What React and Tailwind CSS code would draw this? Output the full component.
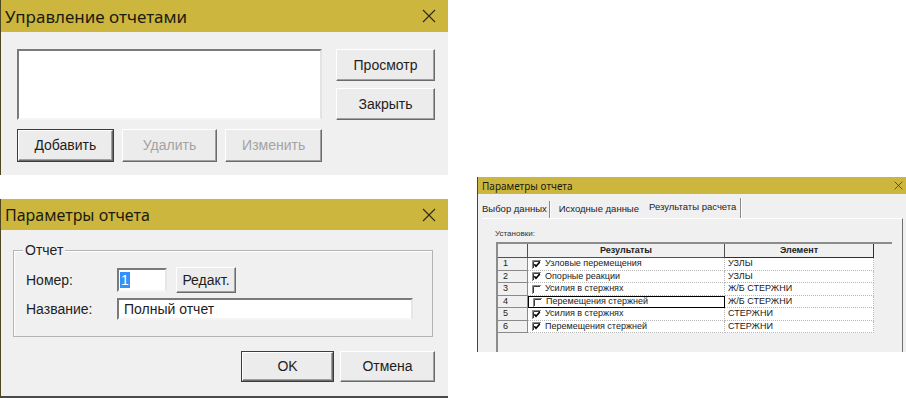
import React from "react";

const SANS = "font-['Liberation_Sans',Arial,sans-serif]";
const TITLE = "font-['Noto_Sans',sans-serif]";

function CloseX({ size = 14 }) {
  return (
    <svg width={size} height={size} viewBox="0 0 14 14" className="shrink-0">
      <path d="M1 1L13 13M13 1L1 13" stroke="#2a2a1a" strokeWidth="1.1" fill="none" />
    </svg>
  );
}

function TitleBar({ title }) {
  return (
    <div className={`h-[32px] bg-[#cdb63e] flex items-center justify-between pl-[4px] pr-[12px] ${TITLE}`}>
      <span className="text-[17px] leading-none text-[#1b1b10]">{title}</span>
      <CloseX />
    </div>
  );
}

function Btn({ children, className = "", disabled = false, isDefault = false }) {
  const inner = (
    <div
      className={`w-full h-full flex items-center justify-center bg-[#ececec] border border-t-white border-l-white border-r-[#6b6b6b] border-b-[#6b6b6b] shadow-[inset_-1px_-1px_0_#a0a0a0] text-[14px] ${SANS} ${
        disabled ? "text-[#a3a3a3]" : "text-[#1e1e1e]"
      }`}
    >
      {children}
    </div>
  );
  if (isDefault) {
    return <div className={`border border-[#3c3c3c] ${className}`}>{inner}</div>;
  }
  return <div className={className}>{inner}</div>;
}

function TopDialog() {
  return (
    <div className="h-[175px] flex flex-col border-l border-[#4d4722] bg-[#f0f0f0]">
      <TitleBar title="Управление отчетами" />
      <div className="flex pt-[17px] pl-[16px]">
        <div className="w-[305px] flex flex-col">
          <div className="h-[71px] bg-white border-2 border-t-[#7a7a7a] border-l-[#7a7a7a] border-r-[#e3e3e3] border-b-[#f5f5f5]" />
          <div className="flex gap-[8px] mt-[9px]">
            <Btn isDefault className="w-[97px] h-[33px]">Добавить</Btn>
            <Btn disabled className="w-[96px] h-[33px]">Удалить</Btn>
            <Btn disabled className="w-[97px] h-[33px]">Изменить</Btn>
          </div>
        </div>
        <div className="ml-[14px] flex flex-col gap-[7px]">
          <Btn className="w-[99px] h-[32px]">Просмотр</Btn>
          <Btn className="w-[99px] h-[32px]">Закрыть</Btn>
        </div>
      </div>
    </div>
  );
}

function ParamsDialog() {
  return (
    <div className="h-[199px] flex flex-col border-l border-[#4d4722] bg-[#f0f0f0]">
      <div className="h-[31px] bg-[#cdb63e] flex items-center justify-between pl-[4px] pr-[12px] font-['Noto_Sans',sans-serif]">
        <span className="text-[16px] leading-none text-[#1b1b10]">Параметры отчета</span>
        <CloseX />
      </div>
      <div className={`flex-1 flex flex-col ${SANS} text-[14px] text-[#1e1e1e] border-b-2 border-[#4a4a4a]`}>
        <div className="relative mt-[20px] ml-[12px] w-[420px] h-[87px] border border-[#b4b4b4] shadow-[inset_1px_1px_0_#ffffff] pt-[16px] pl-[12px]">
          <span className="absolute -top-[10px] left-[9px] px-[2px] bg-[#f0f0f0] leading-[18px]">Отчет</span>
          <div className="flex items-center h-[26px]">
            <span className="w-[91px]">Номер:</span>
            <div className="w-[50px] h-[24px] bg-white border-2 border-t-[#7a7a7a] border-l-[#7a7a7a] border-r-[#e6e6e6] border-b-[#f5f5f5] flex items-center pl-[1px]">
              <span className="bg-[#3390ff] text-white px-[1px] leading-[16px]">1</span>
            </div>
            <Btn className="ml-[9px] w-[60px] h-[26px]">Редакт.</Btn>
          </div>
          <div className="flex items-center h-[22px] mt-[5px]">
            <span className="w-[91px]">Название:</span>
            <div className="w-[296px] h-[22px] bg-white border-2 border-t-[#7a7a7a] border-l-[#7a7a7a] border-r-[#e6e6e6] border-b-[#f5f5f5] flex items-center pl-[5px]">
              Полный отчет
            </div>
          </div>
        </div>
        <div className="flex justify-end gap-[6px] mt-[14px] pr-[13px]">
          <Btn isDefault className="w-[93px] h-[31px]">OK</Btn>
          <Btn className="w-[95px] h-[31px]">Отмена</Btn>
        </div>
      </div>
    </div>
  );
}

function CheckBox({ checked }) {
  return (
    <svg width="9" height="9" viewBox="0 0 9 9" className="shrink-0">
      <rect x="0" y="0" width="9" height="9" fill="white" />
      <path d="M0.5 9V0.5H9" stroke="#8a8a8a" fill="none" />
      <path d="M1.5 8V1.5H8" stroke="#3a3a3a" fill="none" />
      {checked && <path d="M2.3 4.2L4 6.2L7.8 2" stroke="#000" strokeWidth="1.7" fill="none" />}
    </svg>
  );
}

const rows = [
  { n: "1", t: "Узловые перемещения", e: "УЗЛЫ", c: true },
  { n: "2", t: "Опорные реакции", e: "УЗЛЫ", c: true },
  { n: "3", t: "Усилия в стержнях", e: "Ж/Б СТЕРЖНИ", c: false },
  { n: "4", t: "Перемещения стержней", e: "Ж/Б СТЕРЖНИ", c: false, focus: true },
  { n: "5", t: "Усилия в стержнях", e: "СТЕРЖНИ", c: true },
  { n: "6", t: "Перемещения стержней", e: "СТЕРЖНИ", c: true },
];

function RightDialog() {
  return (
    <div className={`w-[429px] h-[175px] flex flex-col border-l border-[#4d4722] bg-[#f0f0f0] ${SANS}`}>
      <div className="h-[17px] bg-[#cdb63e] flex items-center justify-between pl-[4px] pr-[3px] font-['Noto_Sans',sans-serif]">
        <span className="text-[10px] leading-none text-[#1b1b10]">Параметры отчета</span>
        <CloseX size={9} />
      </div>
      <div className="flex-1 flex flex-col pl-[4px] text-[#222]">
        <div className="h-[24px] flex items-end text-[9.5px] leading-[12px]">
          <span className="mb-[3px]">Выбор данных</span>
          <span className="w-[2px] h-[17px] border-l border-[#8a8a8a] border-r border-r-white mx-[2px]" />
          <span className="mb-[3px] ml-[6px]">Исходные данные</span>
          <span className="mb-[5px] ml-[10px]">Результаты расчета</span>
          <span className="w-[2px] h-[20px] border-l border-[#8a8a8a] border-r border-r-white ml-[4px]" />
        </div>
        <div className="flex-1 flex flex-col mr-[3px] border-r border-[#6e6e6e] border-t border-t-white pl-[13px] pt-[9px]">
          <span className="text-[8px] leading-[12px] text-[#333]">Установки:</span>
          <div className="flex-1 mt-[2px] ml-[1px] w-[396px] border-t-2 border-l-2 border-t-[#8c8c8c] border-l-[#8c8c8c] bg-[#f0f0f0]">
            <div className="flex h-[14px] text-[9px] font-bold leading-[13px]">
              <div className="w-[30px] border-r border-b border-[#505050] bg-[#f0f0f0]" />
              <div className="w-[197px] border-r border-b border-[#505050] bg-[#f0f0f0] text-center">Результаты</div>
              <div className="w-[149px] border-r border-b border-[#303030] bg-[#f0f0f0] text-center">Элемент</div>
            </div>
            {rows.map((r, i) => (
              <div key={r.n} className={`flex text-[9px] ${i % 2 === 0 ? "h-[13px]" : "h-[12px]"}`}>
                <div className="w-[30px] border-r border-b border-[#8a8a8a] bg-[#f0f0f0] pl-[5px] flex items-center">{r.n}</div>
                <div
                  className={`w-[197px] bg-white flex items-center pl-[4px] ${
                    r.focus ? "border border-black" : "border-r border-b border-dotted border-[#b8b8b8]"
                  }`}
                >
                  <CheckBox checked={r.c} />
                  <span className="ml-[4px] whitespace-nowrap">{r.t}</span>
                </div>
                <div className="w-[149px] bg-white border-r border-b border-dotted border-[#b8b8b8] pl-[3px] flex items-center whitespace-nowrap">
                  {r.e}
                </div>
              </div>
            ))}
          </div>
        </div>
      </div>
    </div>
  );
}

export default function App() {
  return (
    <div className="w-[906px] h-[398px] bg-white flex overflow-hidden">
      <div className="w-[448px] flex flex-col shrink-0">
        <TopDialog />
        <div className="h-[24px]" />
        <ParamsDialog />
      </div>
      <div className="ml-[29px] pt-[177px] shrink-0">
        <RightDialog />
      </div>
    </div>
  );
}
